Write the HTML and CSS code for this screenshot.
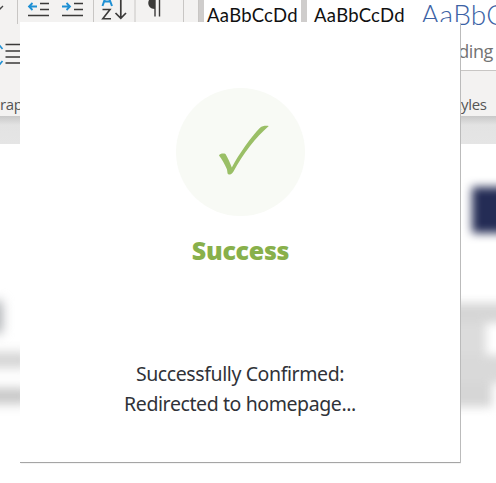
FILE: index.html
```html
<!DOCTYPE html>
<html lang="en">
<head>
<meta charset="utf-8">
<title>Success</title>
<link rel="stylesheet" href="styles.css">
</head>
<body>
<div class="desktop">
  <header class="ribbon">
    <section class="paragraph">
      <svg class="tools" width="199" height="96" viewBox="0 0 199 96" fill="none">
        <path d="M17.500 0V24M93.500 0V24M135 0V24M183.500 0V24M198.500 0V24" stroke="#c8c6c4"/>
        <path d="M-2 4L0 9L3 6" stroke="#444" stroke-width="1.3"/>
        <path d="M40 3.5H49M40 9.5H49M28 15.5H49M74 3.5H83M74 9.5H83M62 15.5H83" stroke="#3b3a39" stroke-width="1.3"/>
        <path d="M37 6.5H29M32.500 3L29 6.500L32.500 10M62 6.500H70M66.500 3L70 6.500L66.500 10" stroke="#1e90d4" stroke-width="1.8"/>
        <path d="M102.500 6L107 -7L112 6M104 1.500H110.500" stroke="#1e90d4" stroke-width="2"/>
        <path d="M102.500 9.500H110L102.800 18.800H111" stroke="#3b3a39" stroke-width="1.600"/>
        <path d="M120.800 0V18M115.500 13L120.800 18.300L126 13" stroke="#3b3a39" stroke-width="1.700"/>
        <path d="M155 0H149C147 4 149 9 155 9Z" fill="#3b3a39"/>
        <path d="M155 0V16.500M159.500 0V16.500" stroke="#3b3a39" stroke-width="1.400"/>
        <path d="M5.500 44.500H20M5.500 51H20M5.500 57H20M5.500 63H20" stroke="#3b3a39" stroke-width="1.400"/>
        <path d="M-3 49L0 46L2.500 49M-3 61L0 64L2.500 61" stroke="#1e90d4" stroke-width="1.700"/>
      </svg>
      <div class="group-name">raph</div>
    </section>
    <section class="styles">
      <div class="gallery">
        <div class="style selected"><span class="sample">AaBbCcDd</span></div>
        <div class="style"><span class="sample">AaBbCcDd</span></div>
        <div class="style heading"><span class="sample">AaBbC</span><span class="name">Heading</span></div>
      </div>
      <div class="group-name">Styles</div>
    </section>
  </header>
  <div class="canvas-edge"></div>
  <main class="document">
    <div class="left-copy"><i class="title"></i><i></i><i class="dark"></i></div>
    <div class="right-copy">
      <b></b>
      <div class="lines"><i></i><i class="short"></i><i class="wide"></i><i class="last"></i></div>
    </div>
  </main>
  <section class="dialog">
    <div class="badge">
      <svg width="129" height="129" viewBox="0 0 129 129">
        <path d="M43 67.500C44 65.500 47.500 65 49.500 66C52 70 54 75 55.800 79.500C63 66 75 49 84 39.800C86.500 37.600 90 37.500 92.800 38C80 49 67 66 57.500 83.500C56 86.200 54.500 86.500 53 86.500C51 86.200 51.700 84 50.800 81C48.500 76 46 71 43 67.500Z" fill="#9abf66"/>
      </svg>
    </div>
    <h1>Success</h1>
    <p>Successfully Confirmed:<br>Redirected to homepage...</p>
  </section>
</div>
</body>
</html>
```
FILE: styles.css
```css
* { box-sizing: border-box; }
body { margin: 0; background: #fff; font-family: "Noto Sans", sans-serif; }
.desktop { position: relative; width: 496px; height: 483px; overflow: hidden; }
.ribbon { display: flex; height: 116px; background: #f3f2f1; color: #555; }
.paragraph { width: 199px; }
.tools { display: block; }
.group-name { font: 15px/16px "Open Sans", sans-serif; letter-spacing: -.3px; color: #555; }
.styles { width: 297px; display: flex; flex-direction: column; }
.gallery { height: 71px; display: flex; background: #fff; border-bottom: 1px solid #c8c6c4; }
.styles .group-name { padding: 25px 0 0 249px; }
.style { width: 105px; padding-top: 4px; flex: none; text-align: center; color: #111; font: 18.500px/22px Lato, sans-serif; letter-spacing: .25px; }
.selected { width: 108px; border: solid #cfcdcc; border-width: 0 6px 0 5px; }
.sample { display: block; white-space: nowrap; }
.heading { width: 84px; padding: 0 0 0 9px; text-align: left; color: #3c62a5; font-weight: 300; font-size: 28px; line-height: 28px; }
.name { display: block; font: 18px/22px "Open Sans", sans-serif; letter-spacing: -.4px; color: #737373; padding: 12px 0 0 5px; white-space: nowrap; }
.canvas-edge { height: 28px; background: linear-gradient(#c8c8c8, #e3e3e3 9px, #e5e5e5); }
.document { height: 339px; display: flex; justify-content: space-between; }
.left-copy { width: 20px; padding-top: 157px; }
.left-copy i, .right-copy i, .right-copy b { display: block; }
.left-copy i { width: 50px; height: 14px; margin: 0 0 22px -20px; background: #cfcfcf; filter: blur(6px); }
.left-copy .title { width: 22px; height: 32px; margin-bottom: 20px; background: #a9acb0; }
.left-copy .dark { background: #c0c0c0; }
.right-copy { width: 46px; padding: 43px 0 0 10px; }
.right-copy b { width: 60px; height: 46px; margin: 0 0 70px 12px; background: #242c55; filter: blur(5px); }
.lines { width: 90px; margin-left: -28px; filter: blur(5px); }
.right-copy i { height: 20px; width: 90px; background: #d6d6d6; }
.right-copy .short { width: 54px; height: 32px; background: #dcdcdc; }
.right-copy .wide { width: 90px; height: 28px; background: #d9d9d9; }
.right-copy .last { width: 60px; height: 24px; background: #d6d6d6; }
.dialog { position: absolute; left: 20px; top: 22px; width: 440px; height: 440px; padding-top: 66px; background: #fff; box-shadow: 1px 1px 0 #a8a8a8, 1px 2px 1px #ccc; clip-path: inset(0 -1px -3px 0); text-align: center; }
.dialog { box-shadow: 0 1px 0 #a5a5a5, 1px 1px 1px #bbb; }
.badge { width: 129px; height: 128px; margin: 0 0 0 156px; border-radius: 50%; background: #f8faf5; }
.badge svg { display: block; }
h1 { margin: 17px 0 0 1px; font: 900 25px/34px "Noto Sans", sans-serif; color: #88b04b; letter-spacing: -.3px; }
p { margin: 92px 0 0; font: 19.500px/30px "Noto Sans", sans-serif; letter-spacing: -.4px; color: #303238; }
```
